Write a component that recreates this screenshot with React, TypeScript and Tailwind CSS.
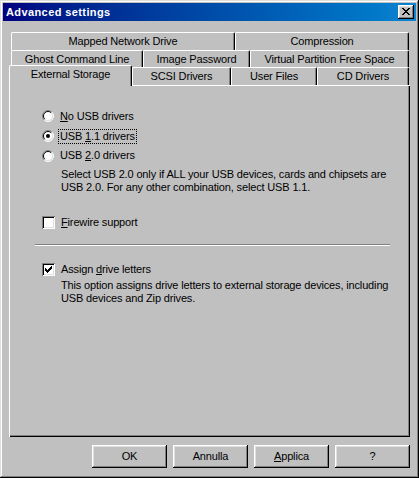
import React from "react";

function Radio({ checked }: { checked?: boolean }) {
  return (
    <svg width="12" height="12" viewBox="0 0 12 12" className="shrink-0">
      <circle cx="6" cy="6" r="5" fill="#fff" />
      <path d="M2.1 9.9 A5.5 5.5 0 0 1 9.9 2.1" fill="none" stroke="#808080" strokeWidth="1" />
      <path d="M9.9 2.1 A5.5 5.5 0 0 1 2.1 9.9" fill="none" stroke="#fff" strokeWidth="1" />
      <path d="M2.8 9.2 A4.5 4.5 0 0 1 9.2 2.8" fill="none" stroke="#000" strokeWidth="1" />
      <path d="M9.2 2.8 A4.5 4.5 0 0 1 2.8 9.2" fill="none" stroke="#dfdfdf" strokeWidth="1" />
      {checked && <circle cx="6" cy="6" r="2" fill="#000" />}
    </svg>
  );
}

function Checkbox({ checked }: { checked?: boolean }) {
  const cols = [
    [3, 5],
    [4, 6],
    [5, 7],
    [6, 6],
    [7, 5],
    [8, 4],
    [9, 3],
  ];
  return (
    <div className="relative w-[13px] h-[13px] shrink-0 bg-white shadow-[inset_1px_1px_#808080,inset_-1px_-1px_#fff,inset_2px_2px_#000,inset_-2px_-2px_#dfdfdf]">
      {checked && (
        <svg width="13" height="13" viewBox="0 0 13 13" className="absolute inset-0" shapeRendering="crispEdges">
          {cols.map(([x, y]) => (
            <rect key={x} x={x} y={y} width="1" height="3" fill="#000" />
          ))}
        </svg>
      )}
    </div>
  );
}

function Tab({ label, w, className = "" }: { label: string; w: string; className?: string }) {
  return (
    <div
      className={`${w} h-full shrink-0 flex items-center justify-center border-t border-l border-r border-white border-r-black rounded-t-[2px] shadow-[inset_-1px_0_#808080] text-black ${className}`}
    >
      {label}
    </div>
  );
}

function Btn({ children }: { children: React.ReactNode }) {
  return (
    <div className="w-[75px] h-[23px] flex items-center justify-center text-black shadow-[inset_-1px_-1px_#000,inset_1px_1px_#fff,inset_-2px_-2px_#808080,inset_2px_2px_#dfdfdf]">
      {children}
    </div>
  );
}

export default function App() {
  return (
    <div className="w-[419px] h-[478px] bg-[#c0c0c0] p-[3px] font-['Liberation_Sans',Arial,sans-serif] text-[11px] leading-[13px] tracking-[-0.15px] shadow-[inset_-1px_-1px_#000,inset_1px_1px_#dfdfdf,inset_-2px_-2px_#808080,inset_2px_2px_#fff] select-none">
      {/* Title bar */}
      <div className="h-[18px] flex items-center justify-between bg-gradient-to-r from-[#000080] to-[#1084d0] pl-[3px] pr-[2px]">
        <span className="text-white font-bold tracking-[0.4px]">Advanced settings</span>
        <div className="w-4 h-[14px] bg-[#c0c0c0] shadow-[inset_-1px_-1px_#000,inset_1px_1px_#fff,inset_-2px_-2px_#808080,inset_2px_2px_#dfdfdf] relative">
          <svg width="16" height="14" viewBox="0 0 16 14" className="absolute inset-0" shapeRendering="crispEdges">
            <rect x="4" y="3" width="2" height="1" fill="#000" />
            <rect x="10" y="3" width="2" height="1" fill="#000" />
            <rect x="5" y="4" width="2" height="1" fill="#000" />
            <rect x="9" y="4" width="2" height="1" fill="#000" />
            <rect x="6" y="5" width="4" height="1" fill="#000" />
            <rect x="7" y="6" width="2" height="1" fill="#000" />
            <rect x="6" y="7" width="4" height="1" fill="#000" />
            <rect x="5" y="8" width="2" height="1" fill="#000" />
            <rect x="9" y="8" width="2" height="1" fill="#000" />
            <rect x="4" y="9" width="2" height="1" fill="#000" />
            <rect x="10" y="9" width="2" height="1" fill="#000" />
          </svg>
        </div>
      </div>

      {/* Tabs */}
      <div className="mt-[11px] ml-[8px]">
        <div className="flex h-[18px]">
          <Tab label="Mapped Network Drive" w="w-[224px]" />
          <Tab label="Compression" w="w-[174px]" />
        </div>
        <div className="flex h-[17px]">
          <Tab label="Ghost Command Line" w="w-[132px]" />
          <Tab label="Image Password" w="w-[107px]" />
          <Tab label="Virtual Partition Free Space" w="w-[159px]" />
        </div>
        <div className="flex h-[18px] items-start">
          <div className="w-[123px] -ml-[2px] -mt-[2px] h-[21px] shrink-0 relative z-10 bg-[#c0c0c0] flex items-center justify-center pb-[3px] border-t border-l border-r border-white border-r-black rounded-t-[2px] shadow-[inset_-1px_0_#808080]">
            External Storage
          </div>
          <Tab label="SCSI Drivers" w="w-[99px]" />
          <Tab label="User Files" w="w-[86px]" />
          <Tab label="CD Drivers" w="w-[92px]" />
        </div>
      </div>

      {/* Panel */}
      <div className="ml-[6px] w-[401px] h-[352px] shadow-[inset_1px_1px_#fff,inset_-1px_-1px_#000,inset_-2px_-2px_#808080] pl-[33px] pt-[21px] text-black">
        <div className="flex items-center h-[20px]">
          <Radio />
          <span className="ml-[4px] border border-transparent px-[1px]">
            <u>N</u>o USB drivers
          </span>
        </div>
        <div className="flex items-center h-[20px]">
          <Radio checked />
          <span className="ml-[4px] border border-dotted border-black px-[1px]">
            USB <u>1</u>.1 drivers
          </span>
        </div>
        <div className="flex items-center h-[19px]">
          <Radio />
          <span className="ml-[4px] border border-transparent px-[1px]">
            USB <u>2</u>.0 drivers
          </span>
        </div>
        <p className="mt-[3px] ml-[19px]">
          Select USB 2.0 only if ALL your USB devices, cards and chipsets are
          <br />
          USB 2.0. For any other combination, select USB 1.1.
        </p>

        <div className="flex items-center h-[20px] mt-[18px]">
          <Checkbox />
          <span className="ml-[4px] border border-transparent px-[1px]">
            <u>F</u>irewire support
          </span>
        </div>

        <div className="mt-[12px] -ml-[7px] w-[355px] h-[2px] border-t border-[#808080] border-b border-b-white" />

        <div className="flex items-center h-[20px] mt-[13px]">
          <Checkbox checked />
          <span className="ml-[4px] border border-transparent px-[1px]">
            Assign <u>d</u>rive letters
          </span>
        </div>
        <p className="ml-[19px]">
          This option assigns drive letters to external storage devices, including
          <br />
          USB devices and Zip drives.
        </p>
      </div>

      {/* Buttons */}
      <div className="mt-[8px] flex justify-end gap-[6px] pr-[6px]">
        <Btn>OK</Btn>
        <Btn>Annulla</Btn>
        <Btn>
          <span>
            <u>A</u>pplica
          </span>
        </Btn>
        <Btn>?</Btn>
      </div>
    </div>
  );
}
